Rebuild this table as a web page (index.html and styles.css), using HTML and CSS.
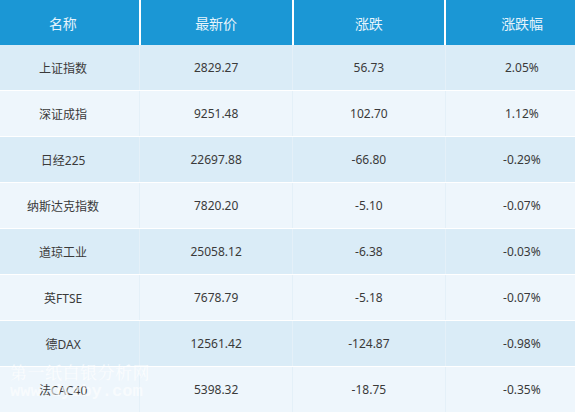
FILE: index.html
```html
<!DOCTYPE html>
<html lang="zh">
<head>
<meta charset="utf-8">
<link rel="stylesheet" href="styles.css">
</head>
<body>
<div class="wrap">
<table class="quotes">
<thead>
<tr><th>名称</th><th>最新价</th><th>涨跌</th><th>涨跌幅</th></tr>
</thead>
<tbody>
<tr><td>上证指数</td><td>2829.27</td><td>56.73</td><td>2.05%</td></tr>
<tr><td>深证成指</td><td>9251.48</td><td>102.70</td><td>1.12%</td></tr>
<tr><td>日经225</td><td>22697.88</td><td>-66.80</td><td>-0.29%</td></tr>
<tr><td>纳斯达克指数</td><td>7820.20</td><td>-5.10</td><td>-0.07%</td></tr>
<tr><td>道琼工业</td><td>25058.12</td><td>-6.38</td><td>-0.03%</td></tr>
<tr><td>英FTSE</td><td>7678.79</td><td>-5.18</td><td>-0.07%</td></tr>
<tr><td>德DAX</td><td>12561.42</td><td>-124.87</td><td>-0.98%</td></tr>
<tr><td>法CAC40</td><td>5398.32</td><td>-18.75</td><td>-0.35%</td></tr>
</tbody>
</table>
<div class="watermark">
<div class="wm-cn">第一纸白银分析网</div>
<div class="wm-url">www.dyzby.com</div>
</div>
</div>
</body>
</html>
```

FILE: styles.css
```css
html, body {
  margin: 0;
  padding: 0;
  background: #ffffff;
}
.wrap {
  position: relative;
  width: 575px;
  height: 415px;
  overflow: hidden;
}
.quotes {
  margin-left: -13px;
  width: 611px;
  table-layout: fixed;
  border-collapse: collapse;
  font-family: "Noto Sans", "Noto Sans CJK SC", sans-serif;
  font-size: 12px;
  color: #3a3a3a;
}
.quotes th {
  height: 45px;
  padding: 0;
  background: #1b97d5;
  color: #e6f4fc;
  font-weight: normal;
  font-size: 14px;
  text-align: center;
  border-left: 2px solid #ffffff;
}
.quotes th:first-child,
.quotes td:first-child {
  border-left: none;
}
.quotes td {
  height: 45px;
  padding: 0;
  text-align: center;
  border-left: 1px solid #e4f0f8;
  border-bottom: 1px solid #ffffff;
}
.quotes tbody tr:nth-child(odd) td {
  background: #daecf7;
}
.quotes tbody tr:nth-child(even) td {
  background: #eef6fc;
}
.watermark {
  position: absolute;
  left: 10px;
  top: 361px;
  color: rgba(255, 255, 255, 0.75);
  pointer-events: none;
}
.wm-cn {
  font-family: "Noto Serif CJK SC", "Noto Sans CJK SC", serif;
  font-size: 17px;
  letter-spacing: 0.5px;
  line-height: 22px;
}
.wm-url {
  font-family: "Liberation Mono", monospace;
  font-size: 17px;
  font-weight: bold;
  line-height: 18px;
  color: rgba(255, 255, 255, 0.6);
}
```
